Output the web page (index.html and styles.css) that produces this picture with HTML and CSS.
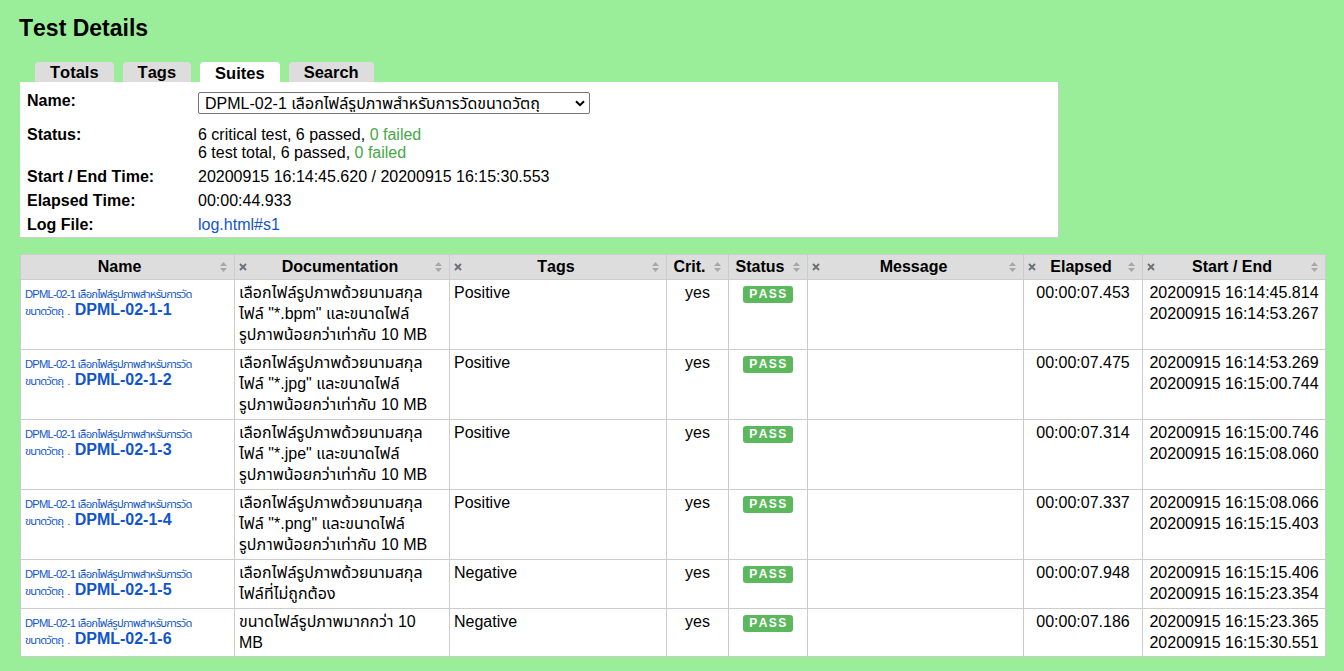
FILE: index.html
```html
<!DOCTYPE html>
<html lang="th">
<head>
<meta charset="utf-8">
<title>Test Details</title>
<link rel="stylesheet" href="styles.css">
</head>
<body>
<div class="page">
  <h2 class="title">Test Details</h2>
  <div class="tabs">
    <div class="tab">Totals</div>
    <div class="tab">Tags</div>
    <div class="tab active">Suites</div>
    <div class="tab">Search</div>
  </div>
  <div class="details">
    <table class="details-table">
      <tr class="name-row">
        <th>Name:</th>
        <td>
          <div class="select-wrap">
            <select class="suite-select"><option>DPML-02-1 เลือกไฟล์รูปภาพสำหรับการวัดขนาดวัตถุ</option></select>
            <svg class="chev" width="10" height="7" viewBox="0 0 10 7"><path d="M1 1.2L5 5.2L9 1.2" fill="none" stroke="#000" stroke-width="2"/></svg>
          </div>
        </td>
      </tr>
      <tr>
        <th>Status:</th>
        <td>6 critical test, 6 passed, <span class="ok">0 failed</span><br>6 test total, 6 passed, <span class="ok">0 failed</span></td>
      </tr>
      <tr>
        <th>Start / End Time:</th>
        <td>20200915 16:14:45.620 / 20200915 16:15:30.553</td>
      </tr>
      <tr>
        <th>Elapsed Time:</th>
        <td>00:00:44.933</td>
      </tr>
      <tr>
        <th>Log File:</th>
        <td><a class="link" href="#">log.html#s1</a></td>
      </tr>
    </table>
  </div>

  <table class="tests">
    <colgroup>
      <col class="c-name"><col class="c-doc"><col class="c-tags"><col class="c-crit"><col class="c-status"><col class="c-msg"><col class="c-elapsed"><col class="c-times">
    </colgroup>
    <thead>
      <tr>
        <th><div class="hdr"><span class="ttl">Name</span><span class="sort"><svg width="7" height="10" viewBox="0 0 7 10"><polygon points="0,4 3.5,0 7,4" fill="#a8a8a8"/><polygon points="0,6 3.5,10 7,6" fill="#a8a8a8"/></svg></span></div></th>
        <th><div class="hdr"><span class="x"><svg width="8" height="8" viewBox="0 0 8 8"><path d="M1 1L7 7M7 1L1 7" stroke="#68707a" stroke-width="1.8"/></svg></span><span class="ttl">Documentation</span><span class="sort"><svg width="7" height="10" viewBox="0 0 7 10"><polygon points="0,4 3.5,0 7,4" fill="#a8a8a8"/><polygon points="0,6 3.5,10 7,6" fill="#a8a8a8"/></svg></span></div></th>
        <th><div class="hdr"><span class="x"><svg width="8" height="8" viewBox="0 0 8 8"><path d="M1 1L7 7M7 1L1 7" stroke="#68707a" stroke-width="1.8"/></svg></span><span class="ttl">Tags</span><span class="sort"><svg width="7" height="10" viewBox="0 0 7 10"><polygon points="0,4 3.5,0 7,4" fill="#a8a8a8"/><polygon points="0,6 3.5,10 7,6" fill="#a8a8a8"/></svg></span></div></th>
        <th><div class="hdr"><span class="ttl">Crit.</span><span class="sort"><svg width="7" height="10" viewBox="0 0 7 10"><polygon points="0,4 3.5,0 7,4" fill="#a8a8a8"/><polygon points="0,6 3.5,10 7,6" fill="#a8a8a8"/></svg></span></div></th>
        <th><div class="hdr"><span class="ttl">Status</span><span class="sort"><svg width="7" height="10" viewBox="0 0 7 10"><polygon points="0,4 3.5,0 7,4" fill="#a8a8a8"/><polygon points="0,6 3.5,10 7,6" fill="#a8a8a8"/></svg></span></div></th>
        <th><div class="hdr"><span class="x"><svg width="8" height="8" viewBox="0 0 8 8"><path d="M1 1L7 7M7 1L1 7" stroke="#68707a" stroke-width="1.8"/></svg></span><span class="ttl">Message</span><span class="sort"><svg width="7" height="10" viewBox="0 0 7 10"><polygon points="0,4 3.5,0 7,4" fill="#a8a8a8"/><polygon points="0,6 3.5,10 7,6" fill="#a8a8a8"/></svg></span></div></th>
        <th><div class="hdr"><span class="x"><svg width="8" height="8" viewBox="0 0 8 8"><path d="M1 1L7 7M7 1L1 7" stroke="#68707a" stroke-width="1.8"/></svg></span><span class="ttl">Elapsed</span><span class="sort"><svg width="7" height="10" viewBox="0 0 7 10"><polygon points="0,4 3.5,0 7,4" fill="#a8a8a8"/><polygon points="0,6 3.5,10 7,6" fill="#a8a8a8"/></svg></span></div></th>
        <th><div class="hdr"><span class="x"><svg width="8" height="8" viewBox="0 0 8 8"><path d="M1 1L7 7M7 1L1 7" stroke="#68707a" stroke-width="1.8"/></svg></span><span class="ttl">Start / End</span><span class="sort"><svg width="7" height="10" viewBox="0 0 7 10"><polygon points="0,4 3.5,0 7,4" fill="#a8a8a8"/><polygon points="0,6 3.5,10 7,6" fill="#a8a8a8"/></svg></span></div></th>
      </tr>
    </thead>
    <tbody>
      <tr>
        <td class="name"><a class="link" href="#"><span class="parent-name">DPML-02-1 เลือกไฟล์รูปภาพสำหรับการวัด<br>ขนาดวัตถุ<span class="dot">.</span></span><b>DPML-02-1-1</b></a></td>
        <td>เลือกไฟล์รูปภาพด้วยนามสกุล<br>ไฟล์ "*.bpm" และขนาดไฟล์<br>รูปภาพน้อยกว่าเท่ากับ 10 MB</td>
        <td>Positive</td>
        <td class="center">yes</td>
        <td class="center"><span class="label">PASS</span></td>
        <td></td>
        <td class="center">00:00:07.453</td>
        <td class="center">20200915 16:14:45.814<br>20200915 16:14:53.267</td>
      </tr>
      <tr>
        <td class="name"><a class="link" href="#"><span class="parent-name">DPML-02-1 เลือกไฟล์รูปภาพสำหรับการวัด<br>ขนาดวัตถุ<span class="dot">.</span></span><b>DPML-02-1-2</b></a></td>
        <td>เลือกไฟล์รูปภาพด้วยนามสกุล<br>ไฟล์ "*.jpg" และขนาดไฟล์<br>รูปภาพน้อยกว่าเท่ากับ 10 MB</td>
        <td>Positive</td>
        <td class="center">yes</td>
        <td class="center"><span class="label">PASS</span></td>
        <td></td>
        <td class="center">00:00:07.475</td>
        <td class="center">20200915 16:14:53.269<br>20200915 16:15:00.744</td>
      </tr>
      <tr>
        <td class="name"><a class="link" href="#"><span class="parent-name">DPML-02-1 เลือกไฟล์รูปภาพสำหรับการวัด<br>ขนาดวัตถุ<span class="dot">.</span></span><b>DPML-02-1-3</b></a></td>
        <td>เลือกไฟล์รูปภาพด้วยนามสกุล<br>ไฟล์ "*.jpe" และขนาดไฟล์<br>รูปภาพน้อยกว่าเท่ากับ 10 MB</td>
        <td>Positive</td>
        <td class="center">yes</td>
        <td class="center"><span class="label">PASS</span></td>
        <td></td>
        <td class="center">00:00:07.314</td>
        <td class="center">20200915 16:15:00.746<br>20200915 16:15:08.060</td>
      </tr>
      <tr>
        <td class="name"><a class="link" href="#"><span class="parent-name">DPML-02-1 เลือกไฟล์รูปภาพสำหรับการวัด<br>ขนาดวัตถุ<span class="dot">.</span></span><b>DPML-02-1-4</b></a></td>
        <td>เลือกไฟล์รูปภาพด้วยนามสกุล<br>ไฟล์ "*.png" และขนาดไฟล์<br>รูปภาพน้อยกว่าเท่ากับ 10 MB</td>
        <td>Positive</td>
        <td class="center">yes</td>
        <td class="center"><span class="label">PASS</span></td>
        <td></td>
        <td class="center">00:00:07.337</td>
        <td class="center">20200915 16:15:08.066<br>20200915 16:15:15.403</td>
      </tr>
      <tr>
        <td class="name"><a class="link" href="#"><span class="parent-name">DPML-02-1 เลือกไฟล์รูปภาพสำหรับการวัด<br>ขนาดวัตถุ<span class="dot">.</span></span><b>DPML-02-1-5</b></a></td>
        <td>เลือกไฟล์รูปภาพด้วยนามสกุล<br>ไฟล์ที่ไม่ถูกต้อง</td>
        <td>Negative</td>
        <td class="center">yes</td>
        <td class="center"><span class="label">PASS</span></td>
        <td></td>
        <td class="center">00:00:07.948</td>
        <td class="center">20200915 16:15:15.406<br>20200915 16:15:23.354</td>
      </tr>
      <tr class="last">
        <td class="name"><a class="link" href="#"><span class="parent-name">DPML-02-1 เลือกไฟล์รูปภาพสำหรับการวัด<br>ขนาดวัตถุ<span class="dot">.</span></span><b>DPML-02-1-6</b></a></td>
        <td>ขนาดไฟล์รูปภาพมากกว่า 10<br>MB</td>
        <td>Negative</td>
        <td class="center">yes</td>
        <td class="center"><span class="label">PASS</span></td>
        <td></td>
        <td class="center">00:00:07.186</td>
        <td class="center">20200915 16:15:23.365<br>20200915 16:15:30.551</td>
      </tr>
    </tbody>
  </table>
</div>
</body>
</html>
```

FILE: styles.css
```css
html, body {
  margin: 0;
  padding: 0;
}

body {
  background: #9aee9a;
  color: #000;
  font-family: "Liberation Sans", Arial, Tahoma, "Noto Sans Thai", "Noto Sans", sans-serif;
  font-size: 16px;
  font-kerning: none;
}

.page {
  padding: 15px 19px 0 20px;
}

.title {
  margin: 0 0 0 -1px;
  font-size: 23px;
  line-height: 26px;
  font-weight: bold;
}

.tabs {
  display: flex;
  gap: 9px;
  margin-top: 21px;
  padding-left: 15px;
}

.tab {
  background: #dddddd;
  font-weight: bold;
  font-size: 16.5px;
  line-height: 18px;
  height: 20px;
  padding: 1px 15px 1px;
  border-radius: 4px 4px 0 0;
  box-sizing: border-box;
}

.tab.active {
  background: #fff;
  height: 21px;
  padding-top: 2px;
  margin-bottom: -1px;
}

.details {
  width: 1039px;
  box-sizing: border-box;
  background: #fff;
  border-right: 1px solid #cccccc;
  border-bottom: 1px solid #cccccc;
}

.details-table {
  border-collapse: collapse;
}

.details-table th {
  width: 157px;
  text-align: left;
  vertical-align: top;
  white-space: nowrap;
  padding: 3px 7px;
  line-height: 18px;
  font-weight: bold;
}

.details-table td {
  vertical-align: top;
  padding: 3px 7px;
  line-height: 18px;
}

.details-table .name-row th {
  padding-top: 10px;
}

.details-table .name-row td {
  padding: 10px 7px 9px;
}

.select-wrap {
  position: relative;
  width: 392px;
}

.suite-select {
  display: block;
  width: 392px;
  height: 22px;
  font-family: "Liberation Sans", Arial, Tahoma, "Noto Sans Thai", sans-serif;
  font-size: 16px;
  color: #000;
  background: #fff;
  border: 1px solid #767676;
  border-radius: 2px;
  padding: 0 20px 0 6px;
  -webkit-appearance: none;
  appearance: none;
}

.chev {
  position: absolute;
  right: 5px;
  top: 8px;
  pointer-events: none;
}

.ok {
  color: #45a845;
}

.link {
  color: #1155cc;
  text-decoration: none;
}

.tests {
  margin-top: 16px;
  width: 1305px;
  table-layout: fixed;
  border-collapse: collapse;
  background: #fff;
}

.c-name { width: 214px; }
.c-doc { width: 215px; }
.c-tags { width: 217px; }
.c-crit { width: 62px; }
.c-status { width: 79px; }
.c-msg { width: 216px; }
.c-elapsed { width: 119px; }
.c-times { width: 183px; }

.tests th {
  background: #dddddd;
  border: 1px solid #cccccc;
  padding: 3px 0;
  line-height: 18px;
  font-weight: bold;
}

.hdr {
  display: flex;
  align-items: center;
}

.hdr .x {
  display: flex;
  align-items: center;
  margin-left: 4px;
  width: 8px;
}

.hdr .ttl {
  flex: 1;
  text-align: center;
  white-space: nowrap;
}

.hdr .sort {
  width: 16px;
  display: flex;
  justify-content: flex-start;
  padding-left: 2px;
  box-sizing: border-box;
}

.tests td {
  border: 1px solid #cccccc;
  padding: 2px 4px 4px;
  line-height: 21px;
  vertical-align: top;
  word-wrap: break-word;
}

.tests td.name {
  line-height: 16px;
  padding-top: 5px;
}

.tests tr.last td {
  padding-bottom: 3px;
}

.parent-name {
  font-size: 11.2px;
  letter-spacing: -0.78px;
}

.parent-name .dot {
  padding: 0 5px 0 4px;
}

.name b {
  font-weight: bold;
}

.center {
  text-align: center;
}

.label {
  display: inline-block;
  background: #5cb85c;
  color: #fff;
  font-weight: bold;
  font-size: 12px;
  line-height: 13px;
  letter-spacing: 1.4px;
  padding: 2px 5px 2px 6px;
  border-radius: 3px;
}
```
